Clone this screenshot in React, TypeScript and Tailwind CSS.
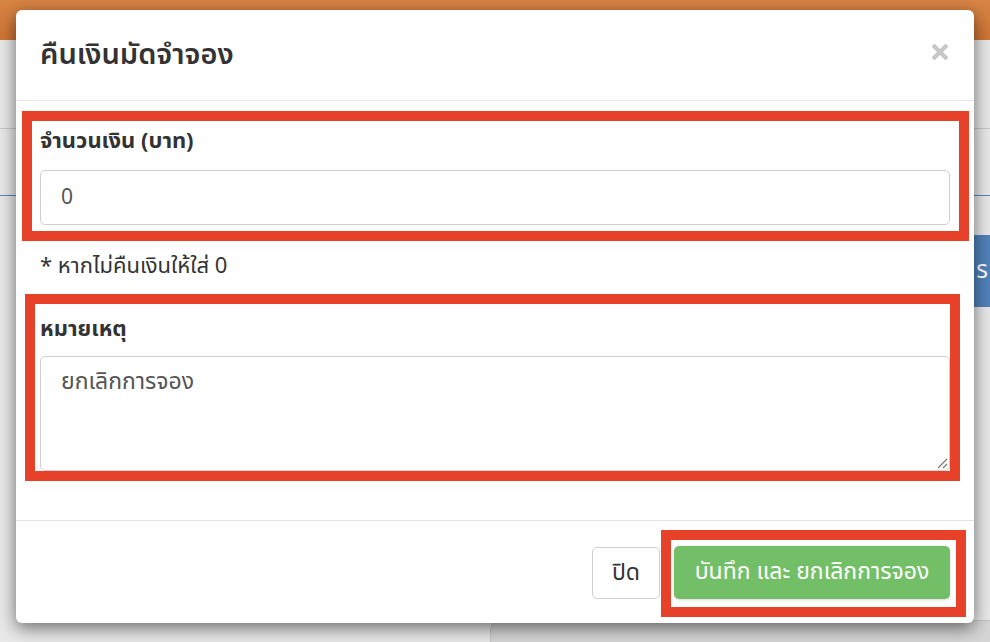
import React from 'react'

const font = { fontFamily: '"Noto Sans Thai", "Noto Sans", "Liberation Sans", sans-serif' }

function CloseIcon() {
  return (
    <svg width="16" height="16" viewBox="0 0 16 16" className="block">
      <path d="M2.5 2.5 L13.5 13.5 M13.5 2.5 L2.5 13.5" stroke="#c6c6c6" strokeWidth="4.2" strokeLinecap="square" />
    </svg>
  )
}

function ResizeGrip() {
  return (
    <svg width="12" height="12" viewBox="0 0 12 12" className="pointer-events-none absolute bottom-[2px] right-[2px]">
      <path d="M11 2 L2 11 M11 7 L7 11" stroke="#777" strokeWidth="1.2" />
    </svg>
  )
}

export default function App() {
  return (
    <div className="relative h-[642px] w-[990px] overflow-hidden bg-[#e9e9e9]" style={font}>
      {/* page behind the modal */}
      <div className="h-[40px] bg-gradient-to-b from-[#d98545] to-[#cf7634]" />
      <div className="flex flex-col">
        <div className="mt-[88px] h-px bg-[#c9c9c9]" />
        <div className="mt-[66px] h-px bg-[#5b86bb]" />
        <div className="mt-[39px] flex justify-end">
          <div className="flex h-[72px] w-[160px] items-center justify-end overflow-hidden bg-[#5282bb] pr-[2px] text-[24px] text-white">
            <span>ร</span>
          </div>
        </div>
        <div className="ml-[490px] mt-[313px] h-[40px] rounded-tl-[10px] border-l border-t border-[#c4c4c4] bg-[#d6d6d6]" />
      </div>

      {/* modal */}
      <div className="absolute left-[16px] top-[10px] flex h-[613px] w-[958px] flex-col rounded-[6px] bg-white shadow-[0_5px_18px_rgba(0,0,0,0.55)]">
        <div className="flex h-[91px] items-center justify-between border-b border-[#e5e5e5] pl-[24px] pr-[26px]">
          <h1 className="text-[29px] font-semibold leading-none text-[#333]">คืนเงินมัดจำจอง</h1>
          <button className="mt-[-7px]"><CloseIcon /></button>
        </div>

        <div className="pl-[6px] pt-[10px] pb-[39px]">
          <div className="w-[947px] border-[10px] border-[#e8412a] pb-[6px] pl-[8px] pr-[9px] pt-[9px]">
            <label className="mb-[16px] block text-[22px] font-bold leading-[24px] text-[#333]">จำนวนเงิน (บาท)</label>
            <input
              readOnly
              value="0"
              className="block h-[55px] w-full rounded-[5px] border border-[#cfcfcf] px-[20px] text-[21px] text-[#555] outline-none"
            />
          </div>
          <p className="ml-[18px] mt-[14px] text-[22px] leading-[24px] text-[#333]">* หากไม่คืนเงินให้ใส่ 0</p>
          <div className="ml-[3px] mt-[15px] w-[935px] border-[10px] border-[#e8412a] pl-[5px] pt-[14px]">
            <label className="mb-[14px] block text-[22px] font-bold leading-[24px] text-[#333]">หมายเหตุ</label>
            <div className="relative">
              <textarea
                readOnly
                value="ยกเลิกการจอง"
                className="block h-[115px] w-full resize-none rounded-[5px] border border-[#cfcfcf] px-[20px] py-[12px] text-[23px] leading-[26px] text-[#555] outline-none"
              />
              <ResizeGrip />
            </div>
          </div>
        </div>

        <div className="flex flex-1 items-center justify-end border-t border-[#e5e5e5] pb-[6px] pr-[8px] pt-[8px]">
          <button className="mr-[1px] h-[52px] w-[68px] rounded-[5px] border border-[#cfcfcf] bg-white text-[23px] text-[#333]">ปิด</button>
          <div className="border-[10px] border-[#e8412a] pb-[8px] pl-[3px] pr-[6px] pt-[6px]">
            <button className="h-[53px] w-[276px] rounded-[5px] bg-[#73bf67] text-[23px] text-white shadow-[0_1px_3px_rgba(0,0,0,0.15)]">
              บันทึก และ ยกเลิกการจอง
            </button>
          </div>
        </div>
      </div>
    </div>
  )
}
